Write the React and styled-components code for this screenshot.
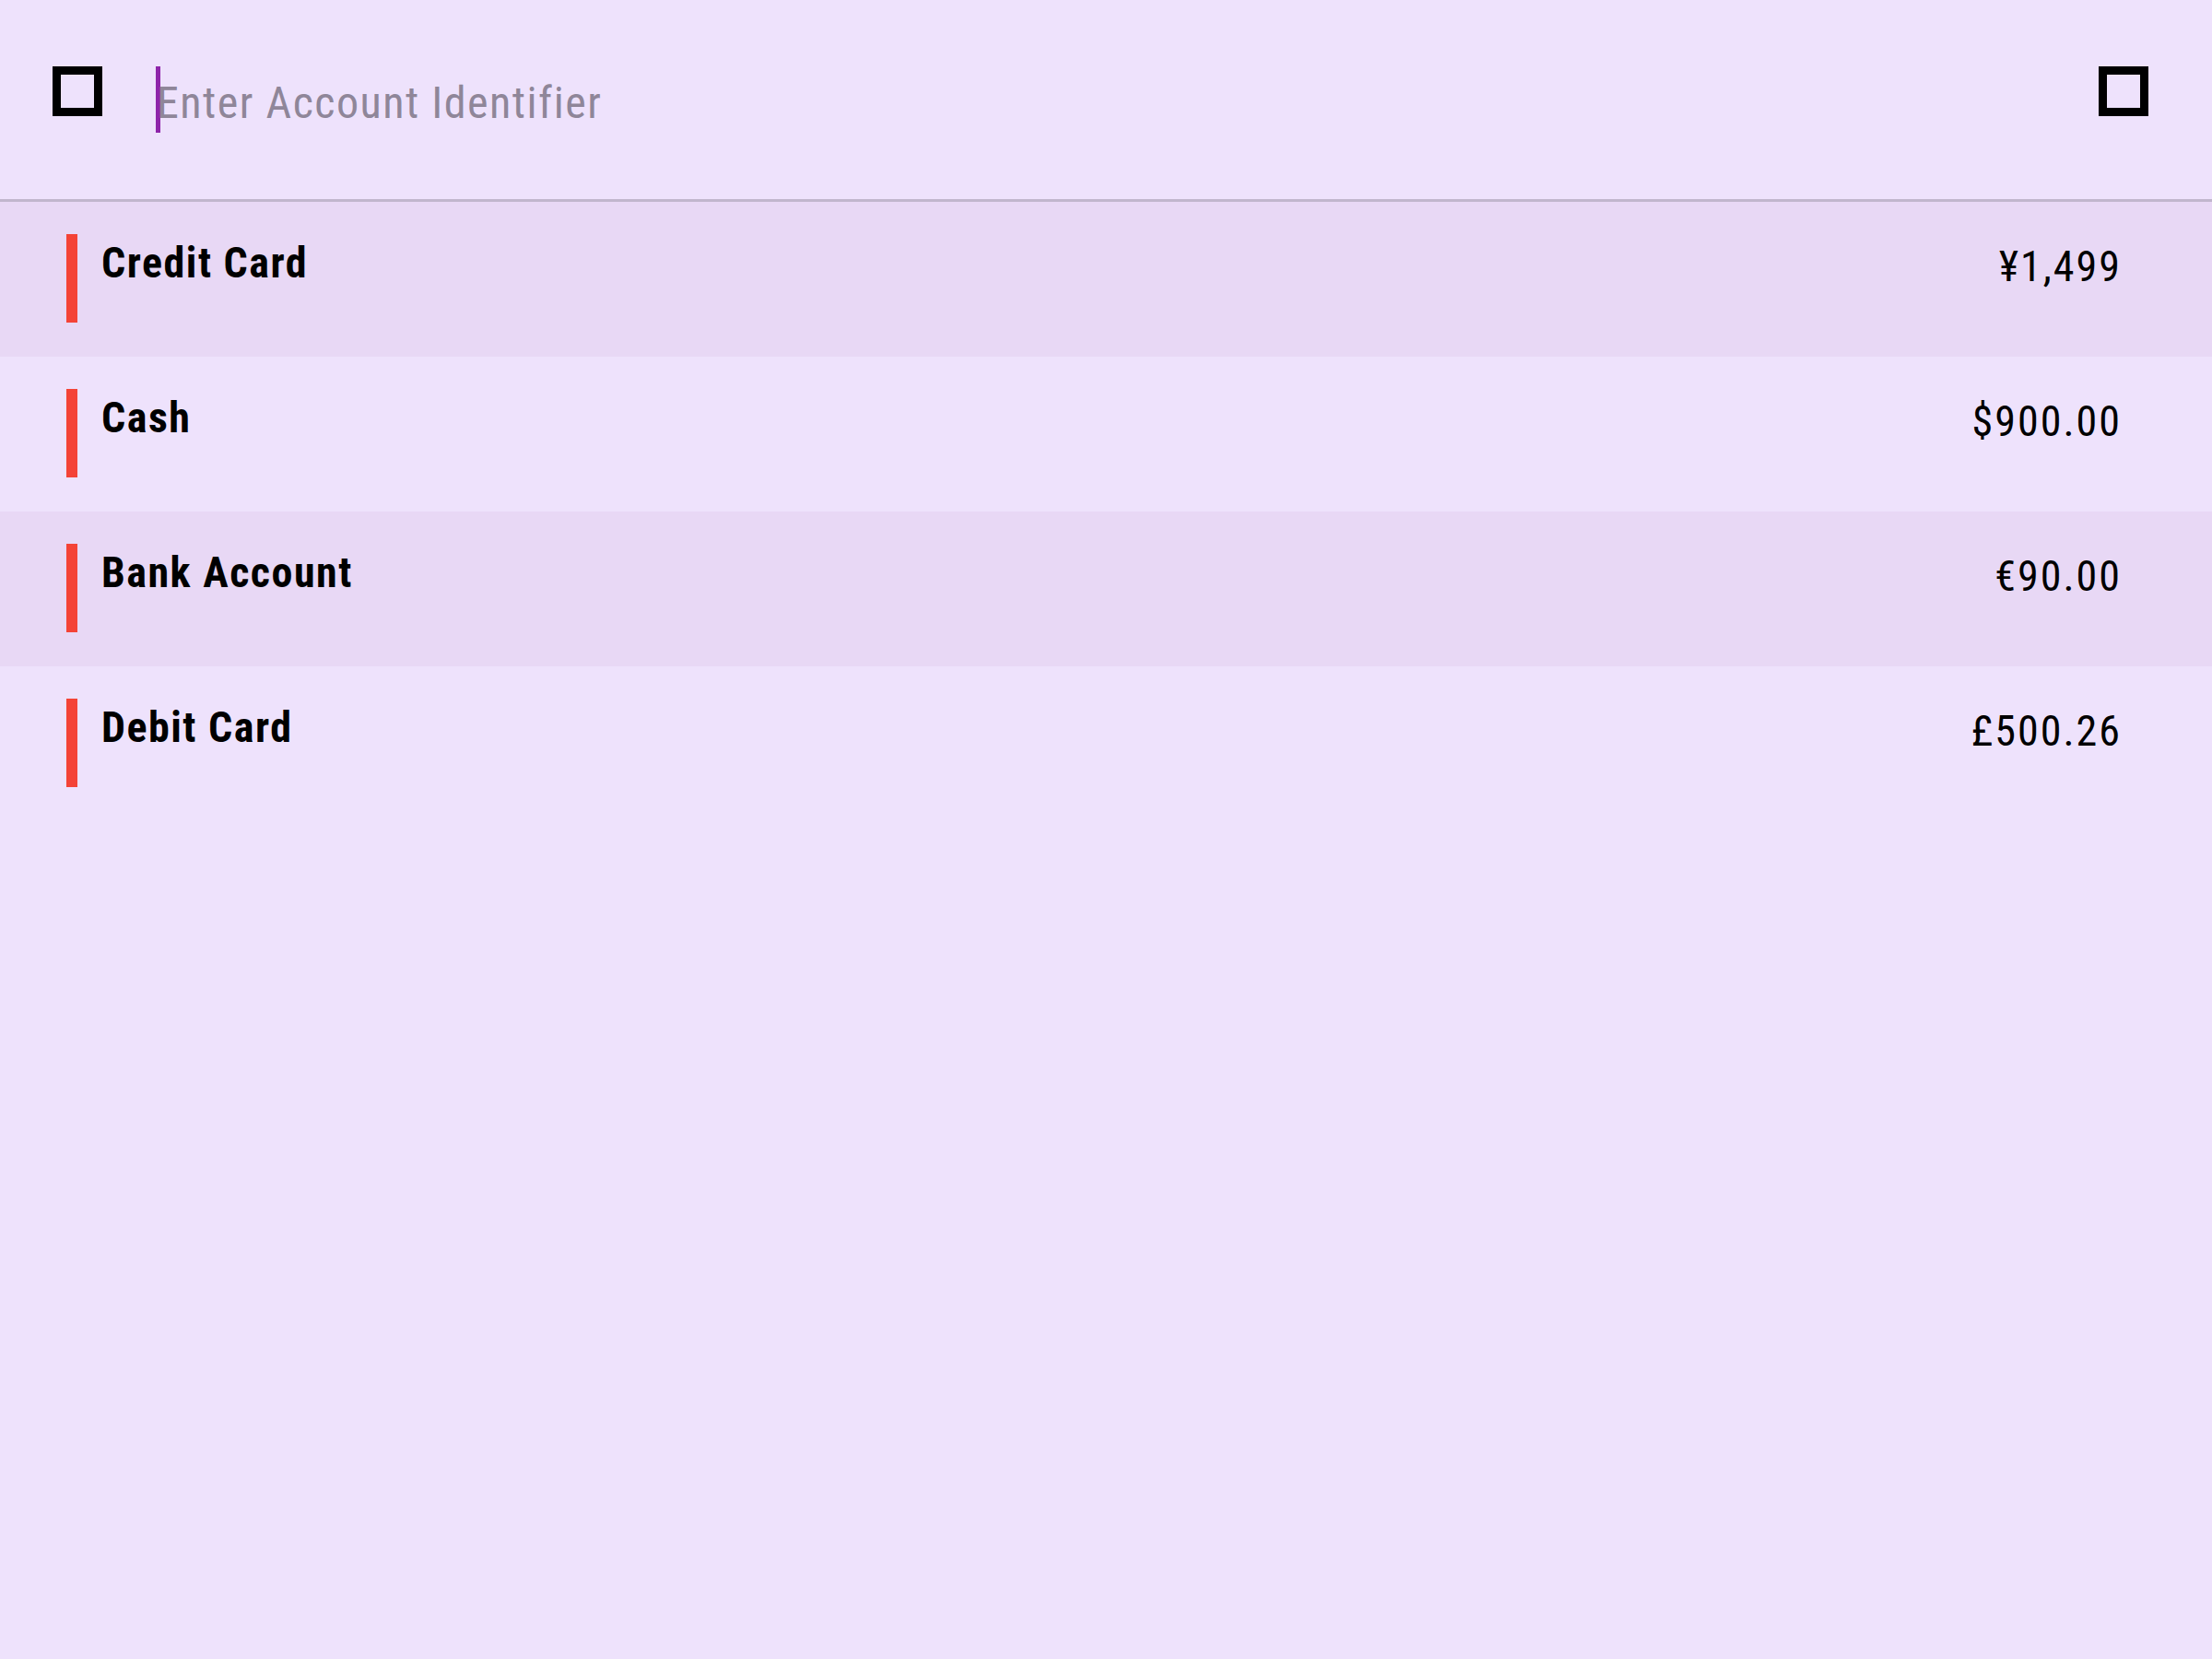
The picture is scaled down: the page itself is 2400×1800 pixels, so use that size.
import styled, { createGlobalStyle } from 'styled-components';

const GlobalStyle = createGlobalStyle`
    html, body {
        margin: 0;
        padding: 0;
        background-color: #eee2fc;
    }
    body {
        font-family: "Roboto", "Noto Sans", sans-serif;
    }
`

const accounts = [
    { name: 'Credit Card', amount: '¥1,499' },
    { name: 'Cash', amount: '$900.00' },
    { name: 'Bank Account', amount: '€90.00' },
    { name: 'Debit Card', amount: '£500.26' },
]

export default function App() {
    return (
        <Page>
            <GlobalStyle />
            <Header>
                <SquareIcon aria-hidden="true" />
                <SearchField>
                    <Caret />
                    <Placeholder>Enter Account Identifier</Placeholder>
                </SearchField>
                <SquareIcon aria-hidden="true" />
            </Header>
            <List>
                {accounts.map((a, i) => (
                    <Row key={a.name} $shaded={i % 2 === 0}>
                        <Marker />
                        <Name>{a.name}</Name>
                        <Amount>{a.amount}</Amount>
                    </Row>
                ))}
            </List>
        </Page>
    )
}

const Page = styled.main`
    min-height: 1800px;
    background-color: #eee2fc;
    display: flex;
    flex-direction: column;
`

const Header = styled.header`
    height: 219px;
    box-sizing: border-box;
    display: flex;
    align-items: flex-start;
    padding: 72px 69px 0 57px;
    gap: 58px;
    border-bottom: 3px solid #c1b6cd;
`

const SquareIcon = styled.span`
    flex: none;
    width: 54px;
    height: 54px;
    box-sizing: border-box;
    border: 9px solid #000;
`

const SearchField = styled.div`
    flex: 1;
    display: flex;
    align-items: flex-start;
    height: 72px;
`

const Caret = styled.span`
    flex: none;
    width: 5px;
    height: 72px;
    background-color: #8e24aa;
`

const Placeholder = styled.span`
    margin-left: -4px;
    font-size: 48px;
    line-height: 1;
    padding-top: 16px;
    color: #8f8699;
    letter-spacing: 1.5px;
    font-stretch: condensed;
`

const List = styled.section`
    display: flex;
    flex-direction: column;
`

const Row = styled.div`
    height: 168px;
    box-sizing: border-box;
    display: flex;
    align-items: flex-start;
    padding: 35px 98px 0 72px;
    background-color: ${p => p.$shaded ? '#e8d8f5' : '#eee2fc'};
`

const Marker = styled.span`
    flex: none;
    width: 12px;
    height: 96px;
    background-color: #f44336;
    margin-right: 26px;
`

const Name = styled.span`
    flex: 1;
    padding-top: 8px;
    font-size: 46px;
    line-height: 1;
    font-weight: 700;
    letter-spacing: 1.5px;
    font-stretch: condensed;
    color: #000;
`

const Amount = styled.span`
    padding-top: 12px;
    font-size: 46px;
    line-height: 1;
    letter-spacing: 2px;
    font-stretch: condensed;
    color: #000;
`
